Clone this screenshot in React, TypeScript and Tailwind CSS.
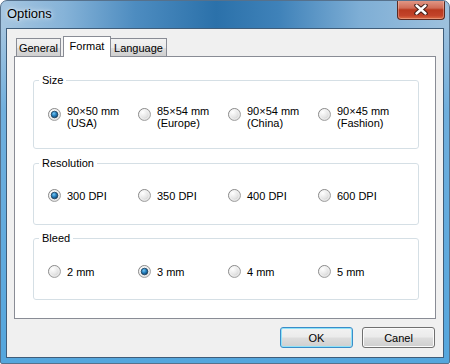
import type { ReactNode } from 'react'

type Choice = { label: string; sub?: string; checked?: boolean }

const sizes: Choice[] = [
  { label: '90×50 mm', sub: '(USA)', checked: true },
  { label: '85×54 mm', sub: '(Europe)' },
  { label: '90×54 mm', sub: '(China)' },
  { label: '90×45 mm', sub: '(Fashion)' },
]

const resolutions: Choice[] = [
  { label: '300 DPI', checked: true },
  { label: '350 DPI' },
  { label: '400 DPI' },
  { label: '600 DPI' },
]

const bleeds: Choice[] = [
  { label: '2 mm' },
  { label: '3 mm', checked: true },
  { label: '4 mm' },
  { label: '5 mm' },
]

const Radio = ({ checked }: { checked?: boolean }) => (
  <svg width="13" height="13" viewBox="0 0 13 13" className="shrink-0">
    <defs>
      <linearGradient id="radioRing" x1="0" y1="0" x2="1" y2="1">
        <stop offset="0" stopColor="#7a7a7a" />
        <stop offset="1" stopColor="#b4b4b4" />
      </linearGradient>
      <radialGradient id="radioFill" cx="0.35" cy="0.3" r="0.8">
        <stop offset="0" stopColor="#ffffff" />
        <stop offset="0.55" stopColor="#e6e6e6" />
        <stop offset="1" stopColor="#c4c4c4" />
      </radialGradient>
      <radialGradient id="radioDot" cx="0.4" cy="0.35" r="0.7">
        <stop offset="0" stopColor="#7cc8f2" />
        <stop offset="0.45" stopColor="#2a86c4" />
        <stop offset="1" stopColor="#0c3f6c" />
      </radialGradient>
    </defs>
    <circle cx="6.5" cy="6.5" r="6" fill="url(#radioFill)" stroke="url(#radioRing)" />
    <circle cx="6.5" cy="6.5" r="4.6" fill="none" stroke="#f6f6f6" strokeWidth="0.8" />
    {checked && <circle cx="6.5" cy="6.5" r="3.3" fill="url(#radioDot)" stroke="#1d3d58" strokeWidth="0.8" />}
  </svg>
)

const Group = ({ title, className, children }: { title: string; className?: string; children: ReactNode }) => (
  <fieldset className={`rounded-[3px] border border-[#d5dfe5] ${className ?? ''}`}>
    <legend className="ml-[5px] px-[3px] text-[11px] leading-[13px]">{title}</legend>
    {children}
  </fieldset>
)

const ChoiceRow = ({ items, className }: { items: Choice[]; className: string }) => (
  <div className={`grid grid-cols-[90px_90px_90px_90px] pl-[14px] ${className}`}>
    {items.map((c) => (
      <div key={c.label} className={`flex gap-[6px] ${c.sub ? 'items-start' : 'items-center'}`}>
        <div className={c.sub ? 'mt-[3px]' : ''}>
          <Radio checked={c.checked} />
        </div>
        <div className="text-[11px] leading-[12px]">
          <div>{c.label}</div>
          {c.sub && <div>{c.sub}</div>}
        </div>
      </div>
    ))}
  </div>
)

const Button = ({ label, primary }: { label: string; primary?: boolean }) => (
  <button
    type="button"
    className={`h-[21px] w-[73px] rounded-[3px] border text-[11px] leading-[12px] bg-[linear-gradient(180deg,#f2f2f2_0%,#ebebeb_48%,#dddddd_52%,#cfcfcf_100%)] ${
      primary
        ? 'border-[#3a8dc9] shadow-[inset_0_0_0_1px_#8fe2f8]'
        : 'border-[#707070] shadow-[inset_0_0_0_1px_#fbfbfb]'
    }`}
  >
    {label}
  </button>
)

export default function App() {
  return (
    <div className="flex h-[364px] w-[450px] flex-col overflow-hidden rounded-t-[7px] rounded-b-[2px] border border-[#56718c] bg-[linear-gradient(180deg,rgba(90,166,220,0)_0px,rgba(90,166,220,0)_26px,rgba(95,168,220,0.75)_110px,#54a6dd_100%),linear-gradient(90deg,#a6c6e0_0%,#86b3d8_14%,#4d8cc0_30%,#2b71aa_48%,#3f82b9_62%,#7eaed5_80%,#9ec1de_100%)] font-['Liberation_Sans',Arial,sans-serif] text-black">
      <div className="flex h-[27px] shrink-0 items-start justify-between">
        <div className="pl-[6px] pt-[5px] text-[13px] leading-[15px] [text-shadow:0_0_6px_rgba(255,255,255,0.9),0_0_3px_rgba(255,255,255,0.7)]">
          Options
        </div>
        <div className="-mt-px mr-[4px] flex h-[20px] w-[48px] items-center justify-center rounded-b-[4px] border border-t-0 border-[#5a2a22] bg-[linear-gradient(180deg,#e39c8b_0%,#d06c57_42%,#b9391f_52%,#c2432a_82%,#de6e45_100%)] shadow-[inset_0_0_0_1px_rgba(255,220,210,0.35)]">
          <svg width="14" height="11" viewBox="0 0 14 11">
            <path d="M2.5 1.5 L11.5 9.5 M11.5 1.5 L2.5 9.5" stroke="#3d1a14" strokeWidth="4.4" strokeLinecap="round" />
            <path d="M2.5 1.5 L11.5 9.5 M11.5 1.5 L2.5 9.5" stroke="#ffffff" strokeWidth="2.4" strokeLinecap="round" />
          </svg>
        </div>
      </div>

      <div className="mx-[5px] mb-[5px] flex flex-1 flex-col border border-[#3f5d7a] bg-[#f0f0f0] px-[7px] pt-[7px]">
        <div className="flex h-[20px] items-end pl-[2px] text-[11px] leading-[13px]">
          <div className="h-[18px] w-[45px] border border-b-0 border-[#898c95] bg-[linear-gradient(180deg,#f2f2f2_0%,#ebebeb_50%,#dddddd_50%,#cfcfcf_100%)] pt-[3px] text-center">
            General
          </div>
          <div className="relative z-10 -mb-px ml-[2px] h-[21px] w-[48px] border border-b-0 border-[#898c95] bg-white pt-[3px] text-center">
            Format
          </div>
          <div className="-ml-px h-[18px] w-[57px] border border-b-0 border-[#898c95] bg-[linear-gradient(180deg,#f2f2f2_0%,#ebebeb_50%,#dddddd_50%,#cfcfcf_100%)] pt-[3px] text-center">
            Language
          </div>
        </div>

        <div className="flex h-[263px] flex-col border border-[#898c95] bg-white pl-[18px] pr-[16px] pt-[17px]">
          <Group title="Size" className="pb-[19px]">
            <ChoiceRow items={sizes} className="mt-[18px]" />
          </Group>
          <Group title="Resolution" className="mt-[8px] pb-[22px]">
            <ChoiceRow items={resolutions} className="mt-[19px] h-[13px]" />
          </Group>
          <Group title="Bleed" className="mt-[7px] pb-[21px]">
            <ChoiceRow items={bleeds} className="mt-[20px] h-[13px]" />
          </Group>
        </div>

        <div className="mr-[1px] mt-[8px] flex justify-end gap-[9px]">
          <Button label="OK" primary />
          <Button label="Canel" />
        </div>
      </div>
    </div>
  )
}
